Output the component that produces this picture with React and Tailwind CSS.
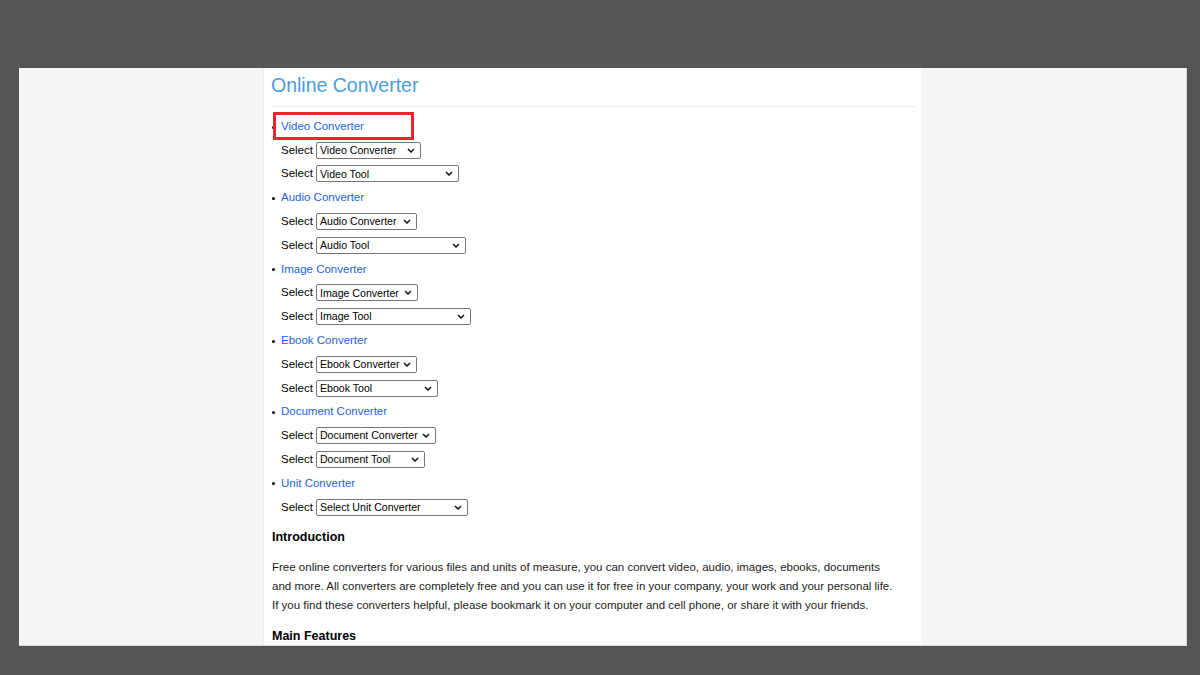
const groups = [
  { title: 'Video Converter', selects: [['Video Converter', 105], ['Video Tool', 143]] },
  { title: 'Audio Converter', selects: [['Audio Converter', 101], ['Audio Tool', 150]] },
  { title: 'Image Converter', selects: [['Image Converter', 102], ['Image Tool', 155]] },
  { title: 'Ebook Converter', selects: [['Ebook Converter', 101], ['Ebook Tool', 122]] },
  { title: 'Document Converter', selects: [['Document Converter', 120], ['Document Tool', 109]] },
  { title: 'Unit Converter', selects: [['Select Unit Converter', 152]] },
]

const Chevron = () => (
  <svg width="8" height="5" viewBox="0 0 8 5" className="shrink-0">
    <path d="M1 1l3 3 3-3" fill="none" stroke="#111" strokeWidth="1.5" />
  </svg>
)

const FakeSelect = ({ label, width }) => (
  <span
    className="inline-flex items-center justify-between h-[17px] border border-[#767676] rounded-[2px] bg-white pl-[3px] pr-[5px] text-[10.6px] text-black leading-none"
    style={{ width }}
  >
    <span className="whitespace-nowrap">{label}</span>
    <Chevron />
  </span>
)

export default function App() {
  return (
    <div className="w-[1200px] h-[675px] bg-[#555555] pt-[68px] pl-[19px] overflow-hidden font-['Liberation_Sans',Arial,sans-serif]">
      <div className="w-[1168px] h-[578px] bg-[#f5f5f5] border-r border-b border-[#d8d8d8] flex overflow-hidden">
        <div className="w-[244px] shrink-0" />
        <div className="w-[658px] shrink-0 bg-white border-l border-[#ececec] pl-[8px] pr-[6px]">
          <h1 className="text-[19.5px] leading-none text-[#4a9de0] -ml-[1px] pt-[8px] pb-[10px] border-b border-[#ececec]">
            Online Converter
          </h1>

          <ul className="mt-[8px] text-[11.5px] text-[#222]">
            {groups.map((g, i) => (
              <li key={g.title}>
                <div className="relative h-[23.8px] flex items-center pl-[9px]">
                  <span className="absolute left-0 top-[11px] w-[3px] h-[3px] rounded-full bg-black" />
                  <span className="text-[#1d63d8]">{g.title}</span>
                  {i === 0 && (
                    <span className="absolute left-[1px] -top-[3px] w-[141px] h-[28px] border-[3px] border-[#e8262b]" />
                  )}
                </div>
                {g.selects.map(([label, w]) => (
                  <div key={label} className="h-[23.8px] flex items-center pl-[9px] gap-[3px]">
                    <span className="text-black">Select</span>
                    <FakeSelect label={label} width={w} />
                  </div>
                ))}
              </li>
            ))}
          </ul>

          <h2 className="mt-[10px] text-[12.5px] font-bold text-black leading-[16px]">Introduction</h2>
          <p className="mt-[13px] text-[11.5px] leading-[19px] text-[#222] whitespace-nowrap">
            Free online converters for various files and units of measure, you can convert video, audio, images, ebooks, documents
            <br />
            and more. All converters are completely free and you can use it for free in your company, your work and your personal life.
            <br />
            If you find these converters helpful, please bookmark it on your computer and cell phone, or share it with your friends.
          </p>
          <h2 className="mt-[13px] text-[12.5px] font-bold text-black leading-[16px]">Main Features</h2>
        </div>
      </div>
    </div>
  )
}
